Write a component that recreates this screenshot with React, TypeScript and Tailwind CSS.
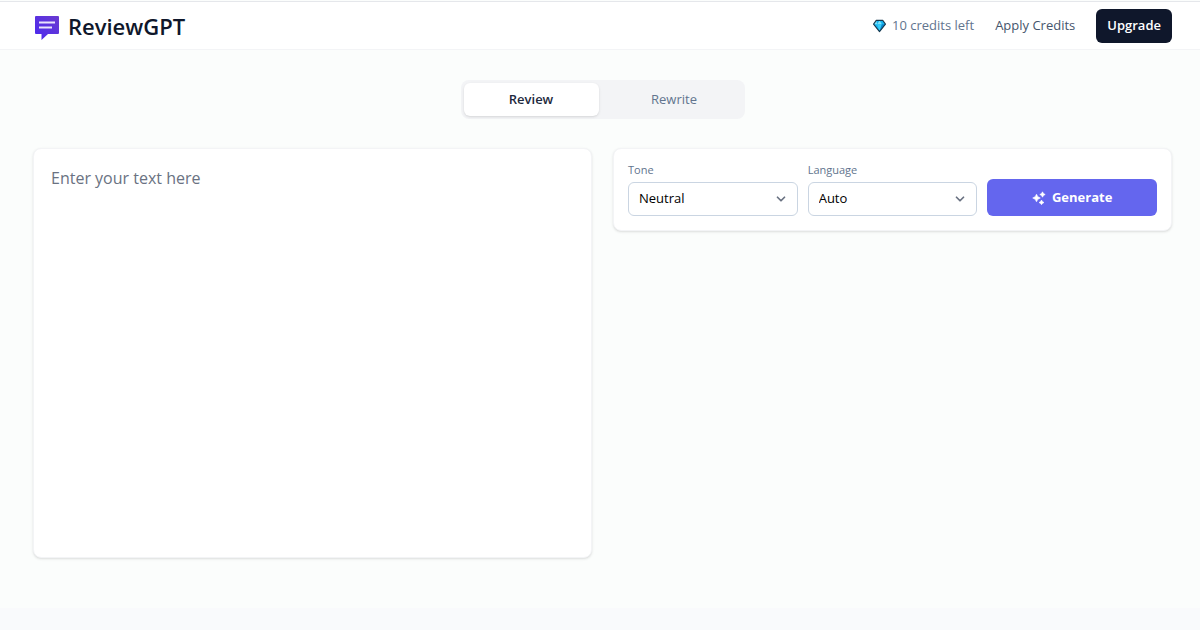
import { useState } from "react";
import { ChevronDown } from "lucide-react";

const tabs = ["Review", "Rewrite"];
const tones = ["Neutral", "Friendly", "Formal"];
const languages = ["Auto", "English", "Spanish"];

function Logo() {
  return (
    <svg className="h-7 w-6" viewBox="0 -4 24 28" aria-hidden>
      <defs>
        <linearGradient id="logo-fill" x1="0" y1="1" x2="1" y2="0">
          <stop offset="0" stopColor="#4a28f0" />
          <stop offset="1" stopColor="#6a3bd0" />
        </linearGradient>
      </defs>
      <path d="M1 0h22a1 1 0 0 1 1 1v16a1 1 0 0 1-1 1H13l-6.500 6V18H1a1 1 0 0 1-1-1V1a1 1 0 0 1 1-1z" fill="url(#logo-fill)" />
      <path d="M4 5.500h16v2H4zM4 10.500h13v2H4z" fill="#e9e4fb" />
    </svg>
  );
}

function Gem() {
  return (
    <svg className="h-3.5 w-[13px]" viewBox="0 0 14 14" aria-hidden>
      <path d="M3.500 1h7L13.400 5 7 13 .6 5z" fill="#18b4f0" />
      <path d="M3.500 1 4.500 5H.6zM7 1l2.500 4h-5z" fill="#7fe3fb" />
      <path d="M4.500 5h5L7 13z" fill="#35cdfa" />
      <path d="M9.500 5h3.900L7 13z" fill="#0b86cc" />
      <path d="M3.500 1h7L13.400 5 7 13 .6 5z" fill="none" stroke="#16384f" strokeWidth="1.200" strokeLinejoin="round" />
    </svg>
  );
}

function Sparkles() {
  return (
    <svg
      className="h-3.5 w-3.5"
      viewBox="0 0 14 14"
      fill="currentColor"
      stroke="currentColor"
      strokeWidth="0.600"
      strokeLinejoin="round"
      aria-hidden
    >
      <path d="M4.500 3.200 5.800 5.700 8.300 7 5.800 8.300 4.500 10.800 3.200 8.300.7 7 3.200 5.700z" />
      <path d="M10.500.8 11.500 2.500 13.200 3.500 11.500 4.500 10.500 6.200 9.500 4.500 7.800 3.500 9.500 2.500z" />
      <path d="M9.500 9 10.400 10.600 12 11.500 10.400 12.400 9.500 13.700 8.600 12.400 7 11.500 8.600 10.600z" />
    </svg>
  );
}

interface SelectFieldProps {
  id: string;
  label: string;
  options: string[];
}

function SelectField({ id, label, options }: SelectFieldProps) {
  return (
    <div className="flex min-w-0 flex-col gap-1">
      <label htmlFor={id} className="text-[11px] leading-4 text-slate-500">
        {label}
      </label>
      <div className="grid items-center">
        <select
          id={id}
          className="col-start-1 row-start-1 h-[34px] w-full appearance-none rounded-md border border-slate-300 bg-white px-2.5 text-[13px] text-black"
        >
          {options.map((option) => (
            <option key={option}>{option}</option>
          ))}
        </select>
        <ChevronDown
          className="pointer-events-none col-start-1 row-start-1 mr-2.5 h-3.5 w-3.5 justify-self-end text-gray-500"
          strokeWidth={3}
          aria-hidden
        />
      </div>
    </div>
  );
}

export default function App() {
  const [active, setActive] = useState("Review");

  return (
    <div className="flex min-h-screen flex-col bg-[#fbfdfc] font-['Open_Sans','Noto_Sans',sans-serif]">
      <header className="mt-px flex items-center justify-between border-y border-t-gray-200 border-b-gray-100 bg-white pt-[7px] pb-1.5 pr-7 pl-[35px]">
        <a href="#" className="flex items-center gap-[9px] text-slate-900">
          <Logo />
          <span className="text-[22px] leading-8 font-semibold">ReviewGPT</span>
        </a>
        <nav className="flex items-center gap-[21px] text-[13px]">
          <span className="flex items-center gap-1.5 text-slate-500">
            <Gem />
            10 credits left
          </span>
          <a href="#" className="text-slate-600">
            Apply Credits
          </a>
          <button type="button" className="h-[34px] rounded-md bg-slate-900 px-[11px] font-semibold text-white">
            Upgrade
          </button>
        </nav>
      </header>

      <main className="flex-1 pt-[30px] pr-7 pb-12 pl-[33px]">
        <div className="mx-auto grid w-full max-w-[284px] grid-cols-2 gap-2 rounded-lg bg-gray-100 p-[3px]">
          {tabs.map((tab) => (
            <button
              key={tab}
              type="button"
              onClick={() => setActive(tab)}
              className={`h-[33px] rounded-md text-[13px] ${
                active === tab ? "bg-white font-semibold text-slate-800 shadow-sm" : "text-slate-500"
              }`}
            >
              {tab}
            </button>
          ))}
        </div>

        <div className="mt-[29px] grid grid-cols-2 items-start gap-[21px]">
          <textarea
            aria-label="Text"
            placeholder="Enter your text here"
            className="block h-[410px] w-full resize-none rounded-lg border border-gray-100 bg-white px-[17px] py-[15px] text-[16px] leading-7 shadow-sm placeholder:text-gray-500"
          />
          <section className="grid grid-cols-3 gap-2.5 rounded-lg border border-gray-100 bg-white px-3.5 pt-[13px] pb-3.5 shadow-sm">
            <SelectField id="tone" label="Tone" options={tones} />
            <SelectField id="language" label="Language" options={languages} />
            <button
              type="button"
              className="flex h-[37px] items-center justify-center gap-1.5 self-end rounded-md bg-[#6466ee] text-[13px] font-bold text-white"
            >
              <Sparkles />
              Generate
            </button>
          </section>
        </div>
      </main>

      <footer className="h-[22px] bg-[#f9fafc]" />
    </div>
  );
}
